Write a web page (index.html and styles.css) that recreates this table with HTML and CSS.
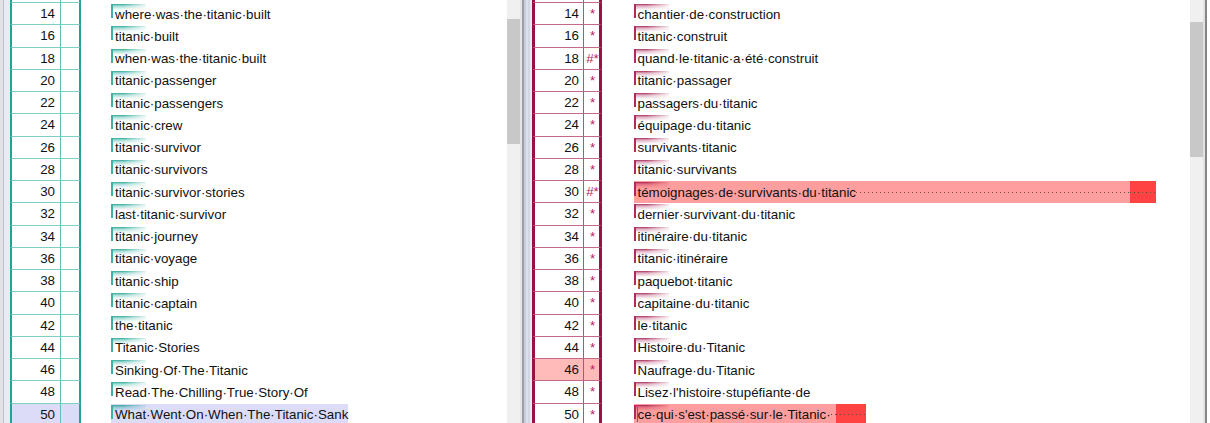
FILE: index.html
```html
<!DOCTYPE html>
<html lang="en">

<head>
  <meta charset="UTF-8">
  <meta name="viewport" content="width=device-width, initial-scale=1.0">
  <title>Segment alignment</title>

  <link rel="stylesheet" href="styles.css">
</head>

<body>
  <main class="frame">
    <div class="edge-left"></div>

    <!-- source pane -->
    <section class="pane src">
      <div class="rows">
        <div class="row cut"><div class="num"></div><div class="flag"></div></div>
        <div class="row"><div class="num">14</div><div class="flag"></div><div class="text"><span class="seg"><i class="mark"></i>where·was·the·titanic·built</span></div></div>
        <div class="row"><div class="num">16</div><div class="flag"></div><div class="text"><span class="seg"><i class="mark"></i>titanic·built</span></div></div>
        <div class="row"><div class="num">18</div><div class="flag"></div><div class="text"><span class="seg"><i class="mark"></i>when·was·the·titanic·built</span></div></div>
        <div class="row"><div class="num">20</div><div class="flag"></div><div class="text"><span class="seg"><i class="mark"></i>titanic·passenger</span></div></div>
        <div class="row"><div class="num">22</div><div class="flag"></div><div class="text"><span class="seg"><i class="mark"></i>titanic·passengers</span></div></div>
        <div class="row"><div class="num">24</div><div class="flag"></div><div class="text"><span class="seg"><i class="mark"></i>titanic·crew</span></div></div>
        <div class="row"><div class="num">26</div><div class="flag"></div><div class="text"><span class="seg"><i class="mark"></i>titanic·survivor</span></div></div>
        <div class="row"><div class="num">28</div><div class="flag"></div><div class="text"><span class="seg"><i class="mark"></i>titanic·survivors</span></div></div>
        <div class="row"><div class="num">30</div><div class="flag"></div><div class="text"><span class="seg"><i class="mark"></i>titanic·survivor·stories</span></div></div>
        <div class="row"><div class="num">32</div><div class="flag"></div><div class="text"><span class="seg"><i class="mark"></i>last·titanic·survivor</span></div></div>
        <div class="row"><div class="num">34</div><div class="flag"></div><div class="text"><span class="seg"><i class="mark"></i>titanic·journey</span></div></div>
        <div class="row"><div class="num">36</div><div class="flag"></div><div class="text"><span class="seg"><i class="mark"></i>titanic·voyage</span></div></div>
        <div class="row"><div class="num">38</div><div class="flag"></div><div class="text"><span class="seg"><i class="mark"></i>titanic·ship</span></div></div>
        <div class="row"><div class="num">40</div><div class="flag"></div><div class="text"><span class="seg"><i class="mark"></i>titanic·captain</span></div></div>
        <div class="row"><div class="num">42</div><div class="flag"></div><div class="text"><span class="seg"><i class="mark"></i>the·titanic</span></div></div>
        <div class="row"><div class="num">44</div><div class="flag"></div><div class="text"><span class="seg"><i class="mark"></i>Titanic·Stories</span></div></div>
        <div class="row"><div class="num">46</div><div class="flag"></div><div class="text"><span class="seg"><i class="mark"></i>Sinking·Of·The·Titanic</span></div></div>
        <div class="row"><div class="num">48</div><div class="flag"></div><div class="text"><span class="seg"><i class="mark"></i>Read·The·Chilling·True·Story·Of</span></div></div>
        <div class="row current"><div class="num">50</div><div class="flag"></div><div class="text"><span class="seg"><i class="mark"></i>What·Went·On·When·The·Titanic·Sank</span></div></div>
      </div>
      <div class="vscroll"><div class="thumb"></div></div>
    </section>

    <div class="splitter"></div>

    <!-- target pane -->
    <section class="pane tgt">
      <div class="rows">
        <div class="row cut"><div class="num"></div><div class="flag"></div></div>
        <div class="row"><div class="num">14</div><div class="flag">*</div><div class="text"><span class="seg"><i class="mark"></i>chantier·de·construction</span></div></div>
        <div class="row"><div class="num">16</div><div class="flag">*</div><div class="text"><span class="seg"><i class="mark"></i>titanic·construit</span></div></div>
        <div class="row"><div class="num">18</div><div class="flag">#*</div><div class="text"><span class="seg"><i class="mark"></i>quand·le·titanic·a·été·construit</span></div></div>
        <div class="row"><div class="num">20</div><div class="flag">*</div><div class="text"><span class="seg"><i class="mark"></i>titanic·passager</span></div></div>
        <div class="row"><div class="num">22</div><div class="flag">*</div><div class="text"><span class="seg"><i class="mark"></i>passagers·du·titanic</span></div></div>
        <div class="row"><div class="num">24</div><div class="flag">*</div><div class="text"><span class="seg"><i class="mark"></i>équipage·du·titanic</span></div></div>
        <div class="row"><div class="num">26</div><div class="flag">*</div><div class="text"><span class="seg"><i class="mark"></i>survivants·titanic</span></div></div>
        <div class="row"><div class="num">28</div><div class="flag">*</div><div class="text"><span class="seg"><i class="mark"></i>titanic·survivants</span></div></div>
        <div class="row"><div class="num">30</div><div class="flag">#*</div><div class="text"><span class="seg err long"><i class="mark"></i>témoignages·de·survivants·du·titanic<span class="ws"></span><span class="ws hot"></span></span></div></div>
        <div class="row"><div class="num">32</div><div class="flag">*</div><div class="text"><span class="seg"><i class="mark"></i>dernier·survivant·du·titanic</span></div></div>
        <div class="row"><div class="num">34</div><div class="flag">*</div><div class="text"><span class="seg"><i class="mark"></i>itinéraire·du·titanic</span></div></div>
        <div class="row"><div class="num">36</div><div class="flag">*</div><div class="text"><span class="seg"><i class="mark"></i>titanic·itinéraire</span></div></div>
        <div class="row"><div class="num">38</div><div class="flag">*</div><div class="text"><span class="seg"><i class="mark"></i>paquebot·titanic</span></div></div>
        <div class="row"><div class="num">40</div><div class="flag">*</div><div class="text"><span class="seg"><i class="mark"></i>capitaine·du·titanic</span></div></div>
        <div class="row"><div class="num">42</div><div class="flag">*</div><div class="text"><span class="seg"><i class="mark"></i>le·titanic</span></div></div>
        <div class="row"><div class="num">44</div><div class="flag">*</div><div class="text"><span class="seg"><i class="mark"></i>Histoire·du·Titanic</span></div></div>
        <div class="row flagged"><div class="num">46</div><div class="flag">*</div><div class="text"><span class="seg"><i class="mark"></i>Naufrage·du·Titanic</span></div></div>
        <div class="row"><div class="num">48</div><div class="flag">*</div><div class="text"><span class="seg"><i class="mark"></i>Lisez·l'histoire·stupéfiante·de</span></div></div>
        <div class="row"><div class="num">50</div><div class="flag">*</div><div class="text"><span class="seg err short"><i class="mark"></i><i class="caret"></i>ce·qui·s'est·passé·sur·le·Titanic·<span class="ws"></span><span class="ws hot"></span></span></div></div>
      </div>
      <div class="vscroll"><div class="thumb"></div></div>
    </section>

    <div class="edge-right"></div>
  </main>
</body>

</html>
```

FILE: styles.css
```css
html,
body {
  padding: 0;
  margin: 0;
  overflow: hidden;
  background: #fff;
}

body {
  font-family: "Liberation Sans", Arial, sans-serif;
  font-size: 13.33px;
  color: #111;
}

.frame {
  display: flex;
  height: 423px;
  width: 1210px;
}

.edge-left {
  width: 10px;
  background: linear-gradient(to right, #e3e3e3 0 3px, #b9c1d6 3px 4px, #e9eaf2 4px);
}

.edge-right {
  width: 7px;
  background: linear-gradient(to right, #e2e2e2 0 2px, #858585 2px 4px, #fff 4px);
}

.splitter {
  width: 12px;
  background: linear-gradient(to right,
      #e4e4e4 0 2px,
      #9c9ea8 2px 4px,
      #c9cdd9 4px 6px,
      #dde0ea 6px 8px,
      #d2d6e2 8px 10px,
      #e9e9f4 10px 12px);
}

.pane {
  display: flex;
  height: 100%;
}

.src {
  width: 510px;
}

.tgt {
  width: 671px;
}

.rows {
  flex: 1;
  overflow: hidden;
}

.vscroll {
  width: 13px;
  background: #f0f0f0;
}

.thumb {
  background: #c8c8c8;
}

.src .thumb {
  margin-top: 19px;
  height: 125px;
}

.tgt .thumb {
  margin-top: 22px;
  height: 135px;
}

/* rows */

.row {
  display: flex;
  height: 22.25px;
}

.row.cut {
  height: 3px;
}

.num,
.flag {
  box-sizing: border-box;
  display: flex;
  align-items: center;
  border-bottom: 1px solid;
}

.num {
  justify-content: flex-end;
}

.flag {
  justify-content: center;
}

.text {
  flex: 1;
  display: flex;
}

.seg {
  position: relative;
  box-sizing: border-box;
  display: flex;
  align-items: center;
  white-space: pre;
}

.mark {
  position: absolute;
  left: 0;
  top: 1px;
  width: 35px;
  height: 14px;
  box-sizing: border-box;
  border-left: 2px solid;
  -webkit-mask-image: linear-gradient(to right, #000 35%, rgba(0, 0, 0, 0.15));
  mask-image: linear-gradient(to right, #000 35%, rgba(0, 0, 0, 0.15));
}

/* source pane colours */

.src .num {
  width: 51px;
  padding-right: 5px;
  border-left: 2px solid #1ea595;
  border-right: 1px solid #5cc1b4;
  border-bottom-color: #7ccfc4;
}

.src .flag {
  width: 20px;
  border-right: 2px solid #1ea595;
  border-bottom-color: #7ccfc4;
}

.src .text {
  margin-left: 30px;
}

.src .seg {
  padding-left: 4px;
}

.src .mark {
  border-left-color: #3fb1a4;
  background: linear-gradient(to bottom, rgba(30, 165, 149, 0.95) 0, rgba(30, 165, 149, 0.4) 2px, rgba(30, 165, 149, 0) 6px);
}

.src .current .num,
.src .current .flag,
.src .current .seg {
  background: #dcdcf9;
}

/* target pane colours */

.tgt .num {
  width: 52px;
  padding-right: 4px;
  border-left: 3px solid #9e0f44;
  border-right: 1px solid #b8507a;
  border-bottom-color: #c4698c;
}

.tgt .flag {
  width: 18px;
  padding-left: 2px;
  color: #b0245a;
  border-right: 3px solid #9e0f44;
  border-bottom-color: #c4698c;
}

.tgt .flagged .num,
.tgt .flagged .flag {
  background: #ffbaba;
}

.tgt .text {
  margin-left: 32px;
}

.tgt .seg {
  padding-left: 3.5px;
}

.tgt .mark {
  border-left-color: #b02a5c;
  background: linear-gradient(to bottom, rgba(160, 18, 72, 0.9) 0, rgba(160, 18, 72, 0.35) 2px, rgba(160, 18, 72, 0) 6px);
}

.seg.err {
  background: #ff9e9e;
}

.seg.long {
  width: 522px;
}

.seg.short {
  width: 232px;
}

.ws {
  flex: 1;
  align-self: stretch;
  background: linear-gradient(to right, #6a4848 1px, transparent 1px) 0 50% / 4px 1px repeat-x;
}

.ws.hot {
  flex: none;
  background-color: #ff4242;
}

.long .ws.hot {
  width: 26px;
}

.short .ws.hot {
  width: 30px;
}

.caret {
  position: absolute;
  left: 3px;
  top: 3px;
  width: 1px;
  height: 15px;
  background: #2b7f90;
}
```
